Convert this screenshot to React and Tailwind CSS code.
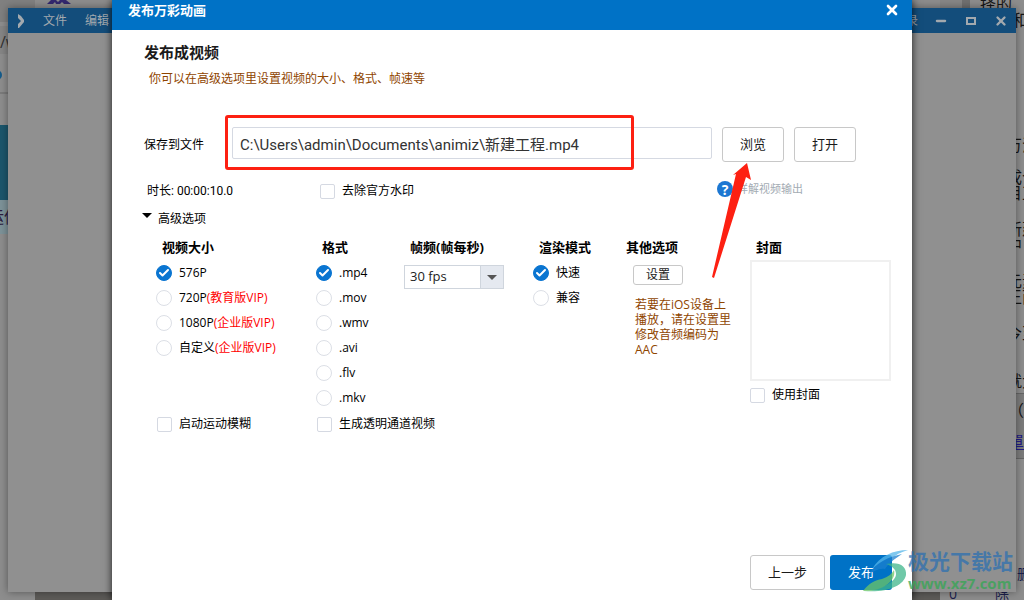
import { Check, Minus, Square, X } from "lucide-react";
import React, { useState } from "react";

const SIZES = [
  { id: "576", label: "576P" },
  { id: "720", label: "720P", vip: "(教育版VIP)" },
  { id: "1080", label: "1080P", vip: "(企业版VIP)" },
  { id: "custom", label: "自定义", vip: "(企业版VIP)" },
];

const FORMATS = [".mp4", ".mov", ".wmv", ".avi", ".flv", ".mkv"];

const Radio = ({ name, checked, onChange, children }) => (
  <label className="flex h-[25px] items-center gap-[7px] whitespace-nowrap">
    <span className="relative flex size-4 items-center justify-center">
      <input
        type="radio"
        name={name}
        checked={checked}
        onChange={onChange}
        className="size-4 appearance-none rounded-full border border-[#dcdfe6] bg-white checked:border-[#0a75d1] checked:bg-[#0a75d1]"
      />
      {checked && (
        <Check
          className="pointer-events-none absolute size-3 text-white"
          strokeWidth={4}
        />
      )}
    </span>
    <span>{children}</span>
  </label>
);

const CheckBox = ({ children }) => (
  <label className="flex items-center gap-[7px] whitespace-nowrap">
    <input
      type="checkbox"
      className="size-[15px] appearance-none rounded-xs border border-[#d5d9e2] bg-white checked:bg-[#0a75d1]"
    />
    <span>{children}</span>
  </label>
);

const Button = ({ className, children }) => (
  <button
    type="button"
    className={`rounded-[3px] border border-[#c8c8c8] bg-white text-[#1a1a1a] ${className}`}
  >
    {children}
  </button>
);

const ColumnTitle = ({ children }) => (
  <h3 className="h-5 pl-[6px] text-[13px] leading-5 font-bold">{children}</h3>
);

const BackgroundPage = () => (
  <div className="absolute inset-0 flex justify-between bg-[#8d8d8d] text-[16px] leading-4 text-[#161616]">
    <div className="flex w-[35px] flex-col overflow-hidden whitespace-nowrap">
      <div className="h-[22px] bg-[#808080]" />
      <div className="mt-1 h-7 bg-[#858585] pt-2 text-[#333]">/w</div>
      <div className="h-10 border-b-2 border-[#7b7b7b] pt-4">
        <div className="-ml-2 size-[10px] rounded-full bg-[#155c8b]" />
      </div>
      <div className="mt-[31px] h-[75px] bg-[#1b566c]" />
      <div className="h-[34px] bg-[#7d9298] pt-[9px]">
        <div className="-ml-3 text-[#2c1b3c]">运信</div>
      </div>
    </div>
    <div className="flex flex-1 flex-col justify-between">
      <div className="h-2 pl-3">
        <svg className="h-1 w-6" viewBox="0 0 24 4">
          <path d="M0 4L4 0H9L11 2L13 0H19L24 4H17L15 2L13 4H9L8 2L6 4Z" fill="#33286f" />
        </svg>
      </div>
      <div className="h-2 bg-[#5d5b58]" />
    </div>
    <div className="flex w-[84px] flex-col overflow-hidden whitespace-nowrap">
      <div className="flex h-[30px]">
        <div className="w-[30px] shrink-0 border-r-8 border-[#707070] bg-[#868686]" />
        <div className="pl-[10px]">
          <div className="-mt-1">择的,</div>
          <div className="pl-8">和不</div>
        </div>
      </div>
      <div className="pt-[107px] pl-[66px]">万汤</div>
      <div className="pt-4 pl-[66px]">成个</div>
      <div className="pl-[66px]">目正</div>
      <div className="pt-5 pl-[66px]">新建</div>
      <div className="pl-[66px]">中</div>
      <div className="pt-5 pl-[66px]">元素</div>
      <div className="pl-[66px]">王面</div>
      <div className="pt-5 pl-[66px]">今至</div>
      <div className="pt-8 pl-[66px]">就大</div>
      <div className="mt-1 h-[66px] border-y border-[#666] bg-[#7c7c7c] pt-2 pl-[68px]">
        <div>（自</div>
        <div className="pt-4 text-[#211b86] underline">單面</div>
      </div>
      <div className="mt-auto flex h-[34px] items-start pl-[9px] text-[14px] text-[#1c1f4d]">
        <span className="pt-5 underline">0</span>
        <span className="pt-5 pl-[38px]">除</span>
        <span className="pl-2">删</span>
      </div>
    </div>
  </div>
);

const EditorWindow = () => (
  <div className="absolute inset-2 bg-[#909090] shadow-[0_0_8px_rgba(0,0,0,0.4)]">
    <div className="flex h-[25px] items-center justify-between bg-[#134d7b] text-[#a3a9ae]">
      <div className="flex items-center gap-[18px] pl-[9px]">
        <svg className="h-4 w-2" viewBox="0 0 8 16" fill="currentColor">
          <path d="M1 1L4 3L7 7V9L2 15H1V11L4 8L1 5Z" />
        </svg>
        <span>文件</span>
        <span>编辑</span>
      </div>
      <div className="flex items-center gap-4 pr-2">
        <span>录</span>
        <button type="button" aria-label="最小化">
          <Minus className="size-[14px]" strokeWidth={4} />
        </button>
        <button type="button" aria-label="最大化">
          <svg
            className="h-[14px] w-[14px]"
            viewBox="0 0 14 14"
            fill="none"
            stroke="currentColor"
            strokeWidth="2"
          >
            <path d="M3 4H11V10H3Z" />
          </svg>
        </button>
        <button type="button" aria-label="关闭窗口">
          <X className="size-[14px]" strokeWidth={4} />
        </button>
      </div>
    </div>
  </div>
);

const Watermark = () => (
  <div className="pointer-events-none absolute right-[11px] bottom-[7px] flex items-center opacity-75">
    <svg className="h-11 w-12" viewBox="0 0 48 44">
      <path d="M12 20C20 7 33 1 48 1C38 4 32 8 28 14C22 14 17 16 12 20Z" fill="#55b6ea" />
      <path d="M8 27C15 13 29 8 42 5C33 11 28 15 25 20C19 19 13 22 8 27Z" fill="#1b80cf" />
      <path
        d="M26 15C39 12 47 17 46 26C44 37 26 44 4 42C22 40 36 33 36 25C36 20 32 17 26 15Z"
        fill="#3fb68b"
      />
      <path d="M3 42C9 34 15 31 22 30C28 28 32 25 34 21C37 33 20 43 3 42Z" fill="#6cc665" />
    </svg>
    <div className="font-bold whitespace-nowrap">
      <div className="text-[21px] leading-6 text-[#2e70b0]">极光下载站</div>
      <div className="text-[15px] leading-5 text-[#35a653]">www.xz7.com</div>
    </div>
  </div>
);

const PublishDialog = () => {
  const [size, setSize] = useState("576");
  const [format, setFormat] = useState(".mp4");
  const [render, setRender] = useState("快速");

  return (
    <section className="absolute inset-x-28 inset-y-0 flex flex-col bg-white text-black shadow-[0_0_8px_rgba(0,0,0,0.8)]">
      <header className="flex h-[30px] items-start justify-between bg-[#0072c6] pr-3 pl-4 text-white">
        <h1 className="text-[13px] leading-5 font-bold">发布万彩动画</h1>
        <button type="button" aria-label="关闭" className="pt-[2px]">
          <X className="size-4" strokeWidth={4} />
        </button>
      </header>

      <div className="px-8 pt-3">
        <h2 className="text-[15px] leading-5 font-bold text-[#1a1a1a]">
          发布成视频
        </h2>
        <p className="mt-[9px] pl-[5px] leading-4 text-[#8f4500]">
          你可以在高级选项里设置视频的大小、格式、帧速等
        </p>

        <div className="mt-10 flex pr-6">
          <label htmlFor="path" className="w-[88px] leading-[35px]">
            保存到文件
          </label>
          <div className="relative flex-1">
            <input
              id="path"
              type="text"
              defaultValue="C:\Users\admin\Documents\animiz\新建工程.mp4"
              className="h-8 w-full rounded-xs border border-[#d5d9e2] px-[7px] font-['Roboto','Noto_Sans_CJK_SC',sans-serif] text-[15px] text-[#333]"
            />
            <div className="pointer-events-none absolute -top-3 right-[78px] -left-[7px] h-[55px] rounded-[3px] border-3 border-[#fd2012]" />
          </div>
          <div className="relative ml-[10px] flex gap-[10px]">
            <Button className="h-[35px] w-[62px] text-[13px]">浏览</Button>
            <Button className="h-[35px] w-[62px] text-[13px]">打开</Button>
            <svg
              className="pointer-events-none absolute top-9 -left-[10px] z-10 h-[116px] w-[40px]"
              viewBox="0 0 40 116"
            >
              <path
                d="M35 0L39 17L34 14L2 115L0 114L24 11L21 12Z"
                fill="#fd2012"
              />
            </svg>
          </div>
        </div>

        <div className="mt-[19px] flex h-5 items-center pl-[3px]">
          <span className="w-[173px] font-['Roboto','Noto_Sans_CJK_SC',sans-serif]">
            时长: 00:00:10.0
          </span>
          <CheckBox>去除官方水印</CheckBox>
          <a
            href="#help"
            className="mr-[77px] mb-1 ml-auto flex items-center gap-1 text-[11px] text-[#a3abb3]"
          >
            <span className="flex size-4 items-center justify-center rounded-full bg-[#1c77d2] text-[14px] font-bold text-white">
              ?
            </span>
            详解视频输出
          </a>
        </div>

        <button type="button" className="mt-2 -ml-[2px] flex h-5 gap-[6px]">
          <svg className="mt-1 h-[5px] w-[10px]" viewBox="0 0 10 5">
            <path d="M0 0H10L5 5Z" />
          </svg>
          <span className="leading-5">高级选项</span>
        </button>
      </div>

      <div className="mt-2 grid grid-cols-[160px_88px_129px_87px_130px_1fr] pl-11">
        <fieldset>
          <ColumnTitle>视频大小</ColumnTitle>
          <div className="mt-[3px]">
            {SIZES.map((item) => (
              <Radio
                key={item.id}
                name="size"
                checked={size === item.id}
                onChange={() => setSize(item.id)}
              >
                {item.label}
                <span className="text-[#ff0000]">{item.vip}</span>
              </Radio>
            ))}
          </div>
        </fieldset>

        <fieldset>
          <ColumnTitle>格式</ColumnTitle>
          <div className="mt-[3px]">
            {FORMATS.map((item) => (
              <Radio
                key={item}
                name="format"
                checked={format === item}
                onChange={() => setFormat(item)}
              >
                {item}
              </Radio>
            ))}
          </div>
        </fieldset>

        <div>
          <ColumnTitle>
            <label htmlFor="fps">帧频(帧每秒)</label>
          </ColumnTitle>
          <div className="relative mt-2 w-[100px]">
            <select
              id="fps"
              className="h-6 w-full appearance-none border border-[#cfd5dd] bg-white px-[5px] text-[13px] text-[#222]"
            >
              <option>30 fps</option>
            </select>
            <div className="pointer-events-none absolute inset-y-px right-px flex w-[23px] items-center justify-center border-l border-[#cfd5dd] bg-[#e5e9f0]">
              <svg className="h-[5px] w-[10px]" viewBox="0 0 10 5">
                <path d="M0 0H10L5 5Z" fill="#555" />
              </svg>
            </div>
          </div>
        </div>

        <fieldset>
          <ColumnTitle>渲染模式</ColumnTitle>
          <div className="mt-[3px]">
            {["快速", "兼容"].map((item) => (
              <Radio
                key={item}
                name="render"
                checked={render === item}
                onChange={() => setRender(item)}
              >
                {item}
              </Radio>
            ))}
          </div>
        </fieldset>

        <div>
          <ColumnTitle>其他选项</ColumnTitle>
          <div className="mt-2 pl-[13px]">
            <Button className="block h-5 w-[50px] leading-none">设置</Button>
            <p className="mt-3 w-[102px] pl-[2px] leading-[15px] text-[#8f4500]">
              若要在iOS设备上播放，请在设置里修改音频编码为AAC
            </p>
          </div>
        </div>

        <div>
          <ColumnTitle>封面</ColumnTitle>
          <div className="mt-[3px] mb-[5px] h-[121px] w-[141px] border-2 border-[#f0f0f0]" />
          <CheckBox>使用封面</CheckBox>
        </div>
      </div>

      <div className="mt-[5px] grid grid-cols-[160px_1fr] pl-[45px]">
        <CheckBox>启动运动模糊</CheckBox>
        <CheckBox>生成透明通道视频</CheckBox>
      </div>

      <footer className="mt-auto flex justify-end gap-[5px] pr-5 pb-[10px]">
        <Button className="h-[35px] w-[75px] text-[13px]">上一步</Button>
        <button
          type="button"
          className="h-[35px] w-[62px] rounded-[3px] bg-[#0072c6] text-[13px] text-white"
        >
          发布
        </button>
      </footer>
    </section>
  );
};

export default function App() {
  return (
    <main className="relative h-screen overflow-hidden font-['Open_Sans','Noto_Sans_CJK_SC',sans-serif] text-[12px]">
      <BackgroundPage />
      <EditorWindow />
      <PublishDialog />
      <Watermark />
    </main>
  );
}
